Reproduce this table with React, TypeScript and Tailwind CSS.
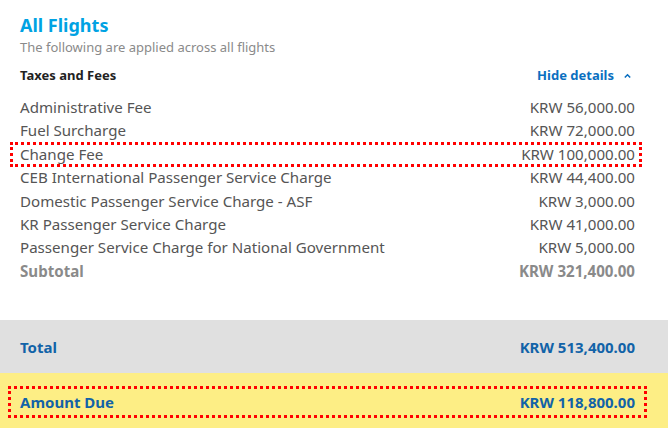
import React from "react";

const rows: [string, string][] = [
  ["Administrative Fee", "KRW 56,000.00"],
  ["Fuel Surcharge", "KRW 72,000.00"],
  ["Change Fee", "KRW 100,000.00"],
  ["CEB International Passenger Service Charge", "KRW 44,400.00"],
  ["Domestic Passenger Service Charge - ASF", "KRW 3,000.00"],
  ["KR Passenger Service Charge", "KRW 41,000.00"],
  ["Passenger Service Charge for National Government", "KRW 5,000.00"],
];

export default function App() {
  return (
    <div
      className="w-[668px] h-[430px] bg-white overflow-hidden flex flex-col"
      style={{ fontFamily: '"Noto Sans", "Open Sans", sans-serif' }}
    >
      <div className="pl-[20px] pr-[33px] pt-[13px]">
        <div className="text-[18px] leading-[24px] font-bold text-[#00a2e3]">All Flights</div>
        <div className="text-[13px] leading-[18px] text-[#8a8a8a] mt-[1px]">
          The following are applied across all flights
        </div>
        <div className="flex items-center justify-between mt-[11px] h-[18px]">
          <div className="text-[13px] font-bold text-[#222]">Taxes and Fees</div>
          <div className="flex items-center gap-[10px] text-[13px] font-bold text-[#0b6fc0] mr-[4px]">
            <span>Hide details</span>
            <svg width="7" height="6" viewBox="0 0 7 6" fill="none">
              <path d="M0.8 4.5 L3.5 1.8 L6.2 4.5" stroke="#0b6fc0" strokeWidth="1.6" />
            </svg>
          </div>
        </div>
        <div className="mt-[11px] text-[15.1px] leading-[23.4px] text-[#555]">
          {rows.map(([l, v], i) => (
            <div key={i} className="relative flex justify-between">
              {l === "Change Fee" && (
                <div className="absolute left-[-10px] right-[-7px] top-[-1px] bottom-[-1px] border-[3px] border-dotted border-[#f00]" />
              )}
              <span>{l}</span>
              <span>{v}</span>
            </div>
          ))}
          <div className="flex justify-between font-bold text-[#8a8a8a]">
            <span>Subtotal</span>
            <span>KRW 321,400.00</span>
          </div>
        </div>
      </div>
      <div className="mt-[37px] h-[53px] bg-[#e0e0e0] pl-[20px] pr-[33px] flex items-center justify-between text-[15px] font-bold text-[#1263a8]">
        <span>Total</span>
        <span>KRW 513,400.00</span>
      </div>
      <div className="h-[55px] bg-[#fdee85] pl-[8px] pr-[21px] pt-[13px]">
        <div className="h-[32px] border-[3px] border-dotted border-[#f00] pl-[9px] pr-[9px] flex items-center justify-between text-[15px] font-bold text-[#1263a8]">
          <span>Amount Due</span>
          <span>KRW 118,800.00</span>
        </div>
      </div>
    </div>
  );
}
